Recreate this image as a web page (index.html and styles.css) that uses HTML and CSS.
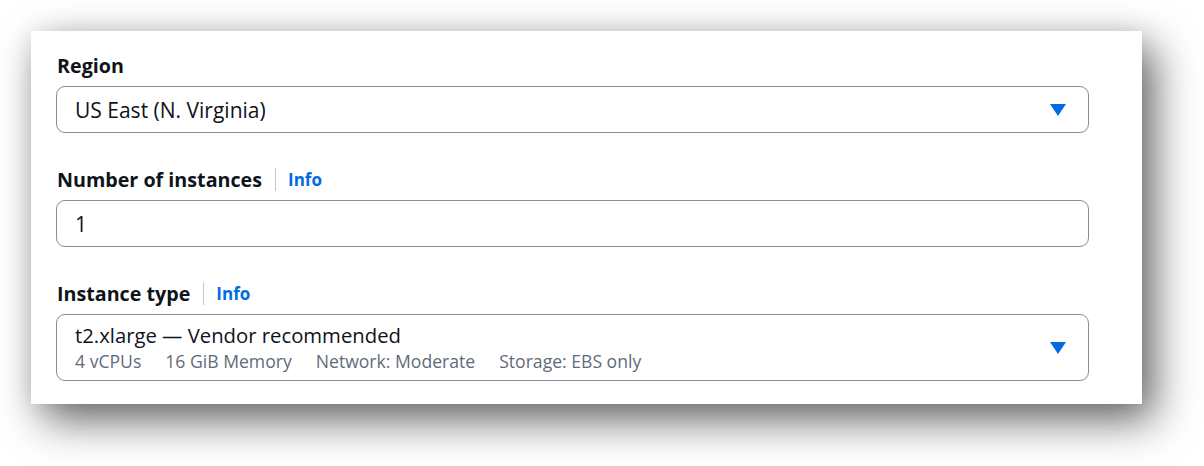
FILE: index.html
```html
<!DOCTYPE html>
<html lang="en">
<head>
  <meta charset="UTF-8">
  <meta name="viewport" content="width=device-width, initial-scale=1.0">
  <title>Launch instance</title>
  <link rel="stylesheet" href="styles.css">
</head>
<body>
  <div class="card">
    <div class="field">
      <div class="label-row">
        <span class="label">Region</span>
      </div>
      <div class="box select">
        <span class="value">US East (N. Virginia)</span>
        <span class="caret"></span>
      </div>
    </div>

    <div class="field">
      <div class="label-row">
        <span class="label">Number of instances</span>
        <span class="divider"></span>
        <a class="info" href="#">Info</a>
      </div>
      <div class="box">
        <span class="value">1</span>
      </div>
    </div>

    <div class="field">
      <div class="label-row">
        <span class="label">Instance type</span>
        <span class="divider"></span>
        <a class="info" href="#">Info</a>
      </div>
      <div class="box select tall">
        <div class="option">
          <span class="title">t2.xlarge — Vendor recommended</span>
          <div class="tags">
            <span>4 vCPUs</span>
            <span>16 GiB Memory</span>
            <span>Network: Moderate</span>
            <span>Storage: EBS only</span>
          </div>
        </div>
        <span class="caret"></span>
      </div>
    </div>
  </div>
</body>
</html>
```

FILE: styles.css
```css
body {
  margin: 0;
  padding-bottom: 62px;
  background: #fff;
  font-family: "Open Sans", Arial, sans-serif;
  color: #0f141a;
}

.card {
  margin: 31px 0 0 31px;
  width: 1111px;
  height: 373px;
  box-sizing: border-box;
  padding: 21px 53px 0 25px;
  background: #fff;
  box-shadow: 12px 16px 40px rgba(0, 0, 0, 0.6), 0 0 24px rgba(0, 0, 0, 0.08);
}

.field {
  margin-bottom: 33px;
}

.label-row {
  display: flex;
  align-items: center;
  height: 26px;
  margin-bottom: 8px;
  padding-left: 1px;
}

.label {
  font-size: 19.7px;
  font-weight: 700;
}

.divider {
  width: 1px;
  height: 23px;
  background: #c6c6cd;
  margin: 0 12px 0 13px;
}

.info {
  color: #006ce0;
  font-size: 17px;
  font-weight: 700;
  text-decoration: none;
}

.box {
  display: flex;
  align-items: center;
  height: 47px;
  box-sizing: border-box;
  border: 1px solid #8c8c94;
  border-radius: 9px;
  padding: 0 22px 0 18px;
}

.box.tall {
  height: 67px;
}

.select {
  justify-content: space-between;
}

.value {
  font-size: 21px;
}

.option {
  display: flex;
  flex-direction: column;
}

.title {
  font-size: 20.3px;
  line-height: 26px;
}

.tags {
  display: flex;
  gap: 24px;
  font-size: 17.6px;
  line-height: 24px;
  color: #5f6b7a;
  margin-top: 1px;
}

.caret {
  width: 0;
  height: 0;
  border-left: 8px solid transparent;
  border-right: 8px solid transparent;
  border-top: 12px solid #006ce0;
}
```
